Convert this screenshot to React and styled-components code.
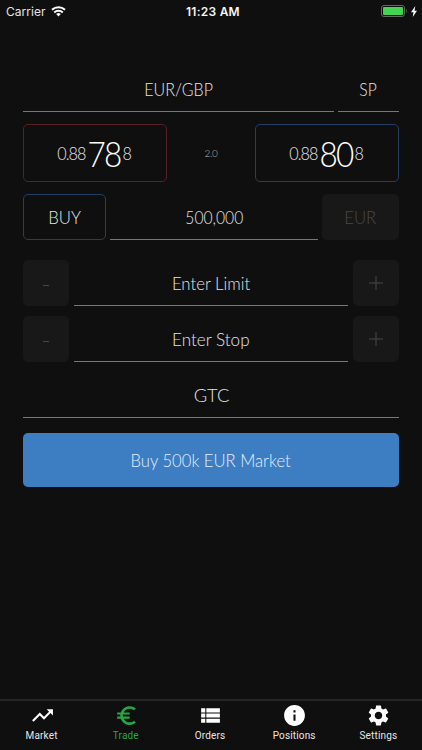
import { useState } from "react";
import styled, { createGlobalStyle, ThemeProvider } from "styled-components";
import {
    MdEuroSymbol,
    MdInfo,
    MdSettings,
    MdTrendingUp,
    MdViewList,
} from "react-icons/md";

const theme = {
    background: "#0f0f0f",
    text: "#e4e4e4",
    line: "#777777",
    disabled: "#181818",
    disabledText: "#484848",
    sell: "#5a2024",
    buy: "#243f66",
    primary: "#3d7dc1",
    active: "#26a745",
};

const GlobalStyle = createGlobalStyle`
    * { box-sizing: border-box; }

    body {
        margin: 0;
        background-color: ${theme.background};
    }

    button {
        margin: 0;
        padding: 0;
        border: 0;
        background: none;
        color: inherit;
        font: inherit;
        letter-spacing: inherit;
    }
`;

const Screen = styled.div`
    display: flex;
    flex-direction: column;
    height: 100vh;
    overflow: hidden;
    background-color: ${(props) => props.theme.background};
    color: ${(props) => props.theme.text};
    font-family: Lato, "Liberation Sans", sans-serif;
    font-size: 18px;
    font-weight: 300;
`;

const StatusBar = styled.header`
    display: grid;
    grid-template-columns: 1fr auto 1fr;
    align-items: center;
    height: 22px;
    padding: 0 5px 0 6px;
    font-family: Inter, "Liberation Sans", sans-serif;
    font-size: 12px;
    font-weight: 400;
    letter-spacing: 0.05px;
`;

const Carrier = styled.div`
    display: flex;
    align-items: center;
    gap: 5px;
`;

const Clock = styled.div`
    padding-left: 3px;
    color: #f5f5f5;
    font-weight: 600;
    letter-spacing: 0.25px;
`;

const Power = styled.div`
    display: flex;
    align-items: center;
    justify-content: flex-end;
    gap: 4px;
`;

const Form = styled.main`
    flex: 1;
    padding: 44px 23px 0;
`;

const Row = styled.div`
    display: flex;
    justify-content: space-between;
    gap: ${(props) => props.$gap || 4}px;
    height: ${(props) => props.$height || 46}px;
    margin-bottom: ${(props) => props.$space || 0}px;
`;

const Field = styled.div`
    display: flex;
    flex: ${(props) => (props.$width ? `0 0 ${props.$width}px` : 1)};
    align-items: center;
    justify-content: center;
    border-bottom: 1px solid ${(props) => props.theme.line};
`;

/* slightly condensed lettering */
const Label = styled.span`
    display: inline-block;
    white-space: nowrap;
    transform: scaleX(${(props) => props.$stretch || 0.93});
`;

const Button = styled.button`
    display: flex;
    flex: 0 0 ${(props) => props.$width}px;
    align-items: center;
    justify-content: center;
    border: 1px solid ${(props) => props.$border || "transparent"};
    border-radius: 5px;

    &:disabled {
        background-color: ${(props) => props.theme.disabled};
        color: ${(props) => props.theme.disabledText};
    }
`;

const Price = styled.span`
    display: flex;
    align-items: center;
    padding-right: 2px;
    letter-spacing: -1px;
    transform: scaleX(0.9);
`;

const Pips = styled.span`
    margin: 0 2px;
    color: #ffffff;
    font-size: 35px;
    line-height: 50px;
    letter-spacing: -1.8px;
`;

const Spread = styled.div`
    align-self: center;
    color: #b5b5b5;
    font-size: 10px;
    letter-spacing: -0.3px;
`;

const Submit = styled.button`
    width: 100%;
    height: 54px;
    border-radius: 5px;
    background-color: ${(props) => props.theme.primary};
    color: #e0efff;
`;

const Tabs = styled.nav`
    display: grid;
    grid-template-columns: repeat(5, 1fr);
    height: 51px;
    padding-right: 1px;
    border-top: 2px solid #252525;
`;

const Tab = styled.button`
    display: flex;
    flex-direction: column;
    align-items: center;
    padding-top: 2px;
    color: ${(props) => (props.$active ? props.theme.active : "#ffffff")};

    svg {
        flex: none;
        width: 25px;
        height: 25px;
    }
`;

const TabLabel = styled.span`
    margin-top: 1px;
    padding-right: 1px;
    color: ${(props) => (props.$active ? props.theme.active : "#e6e6e6")};
    font-family: Roboto, "Liberation Sans", sans-serif;
    font-size: 10px;
    font-weight: 400;
    line-height: 13px;
    letter-spacing: 0.15px;
`;

const WifiIcon = () => (
    <svg width="15" height="11" viewBox="0 0 15 11" fill="none" stroke="#fff">
        <path d="M1 3.8a9.5 9.5 0 0 1 13 0" strokeWidth="2" />
        <path d="M3.2 6.4a6.3 6.3 0 0 1 8.6 0" strokeWidth="2" />
        <path d="M5.2 8.1a3.5 3.5 0 0 1 4.6 0L7.5 10.4z" fill="#fff" stroke="none" />
    </svg>
);

const BatteryIcon = () => (
    <svg width="26" height="12" viewBox="0 0 26 12">
        <rect x="0.5" y="0.5" width="23" height="11" rx="2.5" fill="none" stroke="#666" />
        <rect x="2" y="2" width="20" height="8" rx="1" fill="#43d551" />
        <path d="M25 4v4c.9-.5.9-3.5 0-4z" fill="#777" />
    </svg>
);

const BoltIcon = () => (
    <svg width="6" height="11" viewBox="0 0 6 11">
        <path d="M4.3 0 0 6.2h2.5L1.7 11 6 4.7H3.5z" fill="#fff" />
    </svg>
);

const PlusIcon = () => (
    <svg width="14" height="14" viewBox="0 0 14 14" stroke="currentColor">
        <path d="M0 7h14M7 0v14" />
    </svg>
);

const MinusIcon = () => (
    <svg width="6" height="6" viewBox="0 0 6 6" stroke="currentColor">
        <path d="M0 5.5h6" />
    </svg>
);

const tabs = [
    { name: "Market", icon: MdTrendingUp },
    { name: "Trade", icon: MdEuroSymbol },
    { name: "Orders", icon: MdViewList },
    { name: "Positions", icon: MdInfo },
    { name: "Settings", icon: MdSettings },
];

function Quote({ color, figure, pips, fraction }) {
    return (
        <Button $width={144} $border={color}>
            <Price>
                <span>{figure}</span>
                <Pips>{pips}</Pips>
                <span>{fraction}</span>
            </Price>
        </Button>
    );
}

function Stepper({ label, stretch }) {
    return (
        <Row $gap={5} $space={10}>
            <Button $width={46} disabled aria-label="Decrease">
                <MinusIcon />
            </Button>
            <Field>
                <Label $stretch={stretch}>{label}</Label>
            </Field>
            <Button $width={46} disabled aria-label="Increase">
                <PlusIcon />
            </Button>
        </Row>
    );
}

function App() {
    const [activeTab, setActiveTab] = useState("Trade");

    return (
        <ThemeProvider theme={theme}>
            <GlobalStyle />
            <Screen>
                <StatusBar>
                    <Carrier>
                        Carrier
                        <WifiIcon />
                    </Carrier>
                    <Clock>11:23 AM</Clock>
                    <Power>
                        <BatteryIcon />
                        <BoltIcon />
                    </Power>
                </StatusBar>

                <Form>
                    <Row $space={12}>
                        <Field>
                            <Label $stretch={0.89}>EUR/GBP</Label>
                        </Field>
                        <Field $width={61}>
                            <Label $stretch={0.87}>SP</Label>
                        </Field>
                    </Row>
                    <Row $height={58} $space={12}>
                        <Quote color={theme.sell} figure="0.88" pips="78" fraction="8" />
                        <Spread>2.0</Spread>
                        <Quote color={theme.buy} figure="0.88" pips="80" fraction="8" />
                    </Row>
                    <Row $space={20}>
                        <Button $width={83} $border={theme.buy}>
                            <Label>BUY</Label>
                        </Button>
                        <Field>
                            <Label $stretch={0.87}>500,000</Label>
                        </Field>
                        <Button $width={77} disabled>
                            <Label>EUR</Label>
                        </Button>
                    </Row>
                    <Stepper label="Enter Limit" />
                    <Stepper label="Enter Stop" stretch={0.95} />
                    <Row $space={15}>
                        <Field>
                            <Label $stretch={1.02}>GTC</Label>
                        </Field>
                    </Row>
                    <Submit>
                        <Label $stretch={0.925}>Buy 500k EUR Market</Label>
                    </Submit>
                </Form>

                <Tabs>
                    {tabs.map(({ name, icon: Icon }) => (
                        <Tab
                            key={name}
                            $active={name === activeTab}
                            onClick={() => setActiveTab(name)}
                        >
                            <Icon />
                            <TabLabel $active={name === activeTab}>{name}</TabLabel>
                        </Tab>
                    ))}
                </Tabs>
            </Screen>
        </ThemeProvider>
    );
}

export default App;
